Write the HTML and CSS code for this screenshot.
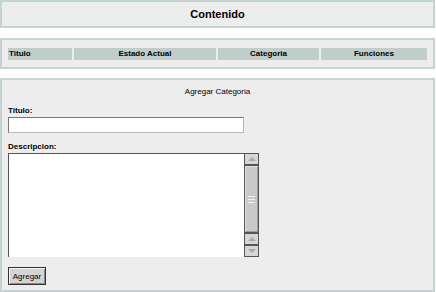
FILE: index.html
```html
<!DOCTYPE html>
<html lang="es">
<head>
    <meta charset="UTF-8">
    <title>Contenido</title>
    <link rel="stylesheet" href="styles.css">
</head>
<body>
    <div class="box header">Contenido</div>

    <div class="box list">
        <table class="list-table">
            <tr>
                <th class="col-titulo">Titulo</th>
                <th class="col-estado">Estado Actual</th>
                <th class="col-categoria">Categoria</th>
                <th class="col-funciones">Funciones</th>
            </tr>
        </table>
    </div>

    <div class="box form-box">
        <div class="form-title">Agregar Categoria</div>
        <div class="label">Titulo:</div>
        <input type="text" class="field">
        <div class="label label-desc">Descripcion:</div>
        <div class="area-wrap">
            <textarea class="area"></textarea>
            <div class="scrollbar">
                <div class="sb-btn"><span class="arr-up"></span></div>
                <div class="sb-thumb"><span class="grip"></span></div>
                <div class="sb-btn"><span class="arr-up"></span></div>
                <div class="sb-btn"><span class="arr-down"></span></div>
            </div>
        </div>
        <button class="btn">Agregar</button>
    </div>
</body>
</html>
```

FILE: styles.css
```css
body {
  margin:0;
  background:#fff;
  font-family:"Liberation Sans", Arial, sans-serif;
  color:#000;
}
.box {
  width:435px;
  box-sizing:border-box;
  background:#ededed;
  border:2px solid #c4d4d0;
}
.header {
  height:28px;
  line-height:24px;
  text-align:center;
  font-size:11px;
  font-weight:bold;
  margin-bottom:10px;
}
.list {
  height:31px;
  padding:6px 4px 0 4px;
  margin-bottom:9px;
}
.list-table {
  width:423px;
  table-layout:fixed;
  border-spacing:2px;
}
.list-table th {
  background:#bfcdcb;
  height:12px;
  padding:0;
  font-size:8px;
  font-weight:bold;
  line-height:12px;
  text-align:center;
}
.list-table th.col-titulo {
  text-align:left;
  padding-left:1px;
  width:63px;
}
.col-estado { width:142px; }
.col-categoria { width:101px; }
.col-funciones { width:106px; }

.form-box {
  height:214px;
  padding:6px 6px 0 6px;
}
.form-title {
  font-size:8px;
  line-height:12px;
  text-align:center;
}
.label {
  font-size:8px;
  font-weight:bold;
  line-height:12px;
  margin-top:7px;
}
.label-desc {
  margin-top:8px;
}
.field {
  display:block;
  width:236px;
  height:16px;
  box-sizing:border-box;
  margin:0;
  background:#fff;
  border:1px solid #b8b8b8;
  border-top-color:#777;
  border-left-color:#777;
}
.area-wrap {
  display:flex;
  width:251px;
  height:104px;
  box-sizing:border-box;
  border:1px solid #555;
  border-bottom:none;
}
.area {
  flex:1;
  border:none;
  margin:0;
  padding:0;
  resize:none;
  background:#fff;
  outline:none;
}
.scrollbar {
  width:13px;
  display:flex;
  flex-direction:column;
  border-left:1px solid #555;
  border-bottom:1px solid #555;
  background:#555;
  gap:2px;
}
.sb-btn {
  height:10px;
  background:#d6d6d6;
  display:flex;
  align-items:center;
  justify-content:center;
}
.sb-thumb {
  flex:1;
  background:#c9c9c9;
  border:1px solid #e2e2e2;
  border-bottom-color:#9c9c9c;
  border-right-color:#9c9c9c;
  display:flex;
  align-items:center;
  justify-content:center;
}
.grip {
  width:7px;
  height:5px;
  border-top:1px solid #f2f2f2;
  border-bottom:1px solid #f2f2f2;
  background:linear-gradient(#c9c9c9 2px, #f2f2f2 2px, #f2f2f2 3px, #c9c9c9 3px);
}
.arr-up {
  width:0;
  height:0;
  border-left:4px solid transparent;
  border-right:4px solid transparent;
  border-bottom:4px solid #a8a8a8;
}
.arr-down {
  width:0;
  height:0;
  border-left:4px solid transparent;
  border-right:4px solid transparent;
  border-top:4px solid #a8a8a8;
}
.btn {
  display:block;
  margin-top:10px;
  width:38px;
  height:18px;
  padding:0;
  font-family:"Liberation Sans", Arial, sans-serif;
  font-size:8px;
  color:#000;
  background:#d4d4d4;
  border:1px solid #333;
  box-shadow:inset 1px 1px 0 #f4f4f4, inset -1px -1px 0 #8a8a8a;
}
```
